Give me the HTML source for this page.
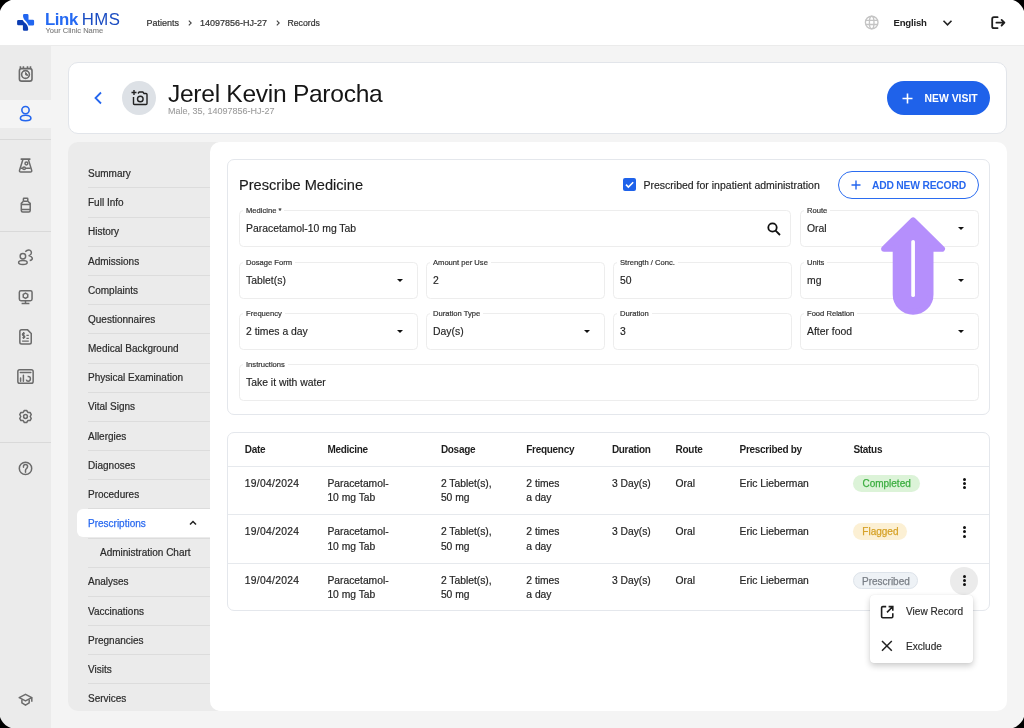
<!DOCTYPE html>
<html><head><meta charset="utf-8">
<style>
*{box-sizing:border-box;margin:0;padding:0}
html,body{width:1024px;height:728px;overflow:hidden;background:#000}
body{font-family:"Liberation Sans",sans-serif;color:#222;position:relative}
.screen{will-change:transform;position:absolute;left:0;top:0;width:1024px;height:728px;overflow:hidden;background:#f4f4f4}
.a{position:absolute;white-space:nowrap}
.topbar{position:absolute;left:0;top:0;width:1024px;height:46px;background:#fff;border-bottom:1px solid #ebebeb}
.side{position:absolute;left:0;top:45px;width:51px;height:683px;background:#ebebeb}
.sep{position:absolute;left:0;width:51px;height:1px;background:#d9d9d9}
.card{position:absolute;background:#fff;border:1px solid #e2e5ea;border-radius:10px}
.nav{position:absolute;left:68px;top:142px;width:150px;height:569px;background:#ebebeb;border-radius:10px 0 0 10px}
.navi{position:absolute;left:88px;font-size:10px;color:#2b2b2b;line-height:12px;-webkit-text-stroke:0.2px #2b2b2b}
.nsep{position:absolute;left:88px;width:122px;height:1px;background:#dcdcdc}
.content{position:absolute;left:210px;top:142px;width:797px;height:569px;background:#fff;border-radius:10px 10px 10px 10px}
.field{position:absolute;border:1px solid #ededed;border-radius:4.5px;background:#fff}
.flab{position:absolute;font-size:7.6px;color:#333;-webkit-text-stroke:0.2px #333;background:#fff;padding:0 3px;line-height:8px;top:-4px;left:3px}
.fval{position:absolute;font-size:10.4px;color:#1f1f1f;left:6px;top:12.4px;line-height:12px;-webkit-text-stroke:0.15px #1f1f1f}
.caret{position:absolute;width:0;height:0;border-left:3.6px solid transparent;border-right:3.6px solid transparent;border-top:3.8px solid #111}
.th{position:absolute;font-size:10px;font-weight:bold;color:#1e1e1e;letter-spacing:-0.3px;line-height:12px}
.td{position:absolute;font-size:10.3px;color:#262626;line-height:14.2px;-webkit-text-stroke:0.2px #262626}
.chip{position:absolute;height:17px;border-radius:9px;font-size:10px;line-height:17px;text-align:center;-webkit-text-stroke:0.25px currentColor}
.dots{position:absolute;width:3px}
.dots i{display:block;width:3px;height:3px;border-radius:50%;background:#111;margin-bottom:1.2px}
</style></head><body>
<div class="screen">
  <div class="topbar"></div>
  <!-- logo -->
  <svg class="a" style="left:14px;top:10px" width="24" height="24" viewBox="0 0 24 24">
    <path d="M9 5.4Q9 4.1 10.3 4.1L13.2 4.1Q14.5 4.1 14.5 5.4L14.5 9.7L18.8 9.7Q20.1 9.7 20.1 11L20.1 14.2Q20.1 15.5 18.8 15.5L14.6 15.5C13.8 13.5 12.5 12 11.2 10.6C9.8 9 9 7.5 9 5.4Z" fill="#2166f0"/>
    <path d="M3.1 11.2Q3.1 9.9 4.4 9.9L8.6 9.9C9.4 11.5 11 12.6 12.2 14C13.3 15.4 14.2 17 14.2 19.5Q14.2 20.8 12.9 20.8L10.2 20.8Q8.9 20.8 8.9 19.5L8.9 15.3L4.4 15.3Q3.1 15.3 3.1 14Z" fill="#0b3cb2"/>
  </svg>
  <div class="a" style="left:45px;top:9.6px;font-size:16.8px;font-weight:bold;color:#2469f2;letter-spacing:-0.4px;line-height:19px">Link</div>
  <div class="a" style="left:81.8px;top:9.6px;font-size:16.8px;color:#1a4cc2;letter-spacing:0.4px;line-height:19px">HMS</div>
  <div class="a" style="left:45.5px;top:27px;font-size:7.5px;color:#7c7c7c;-webkit-text-stroke:0.1px #7c7c7c;line-height:8px">Your Clinic Name</div>
  <!-- breadcrumb -->
  <div class="a" style="left:146.5px;top:17.7px;font-size:9px;color:#333;-webkit-text-stroke:0.2px #333;line-height:11px">Patients</div>
  <svg class="a" style="left:188px;top:20px" width="4" height="6" viewBox="0 0 4 6" fill="none" stroke="#444" stroke-width="1.1"><path d="M0.8 0.6L3.2 3L0.8 5.4"/></svg>
  <div class="a" style="left:200px;top:17.7px;font-size:9px;color:#333;-webkit-text-stroke:0.2px #333;line-height:11px">14097856-HJ-27</div>
  <svg class="a" style="left:275.5px;top:20px" width="4" height="6" viewBox="0 0 4 6" fill="none" stroke="#444" stroke-width="1.1"><path d="M0.8 0.6L3.2 3L0.8 5.4"/></svg>
  <div class="a" style="left:287.5px;top:17.7px;font-size:8.7px;color:#333;-webkit-text-stroke:0.2px #333;line-height:11px">Records</div>
  <!-- right top -->
  <svg class="a" style="left:860px;top:10px" width="24" height="24" viewBox="860 10 24 24" fill="none" stroke="#c4c4c4" stroke-width="1.35">
    <circle cx="871.7" cy="22.5" r="6.3"/><ellipse cx="871.7" cy="22.5" rx="2.3" ry="6.3"/><path d="M865.8 20.4H877.6M865.8 24.5H877.6"/>
  </svg>
  <div class="a" style="left:893.5px;top:16.8px;font-size:9.6px;font-weight:bold;color:#222;letter-spacing:-0.2px;line-height:11px">English</div>
  <svg class="a" style="left:942px;top:19px" width="11" height="8" viewBox="0 0 11 8" fill="none" stroke="#222" stroke-width="1.6"><path d="M1.5 1.8L5.5 5.8L9.5 1.8"/></svg>
  <svg class="a" style="left:986px;top:10px" width="24" height="24" viewBox="986 10 24 24" fill="none" stroke="#1e1e1e" stroke-width="1.8" stroke-linecap="round" stroke-linejoin="round">
    <path d="M997.6 17.2H993.9Q992.2 17.2 992.2 18.9V26.4Q992.2 28.1 993.9 28.1H997.6"/><path d="M996.4 22.7H1004M1001.6 19.9L1004.4 22.7L1001.6 25.5"/>
  </svg>

  <!-- sidebar -->
  <div class="side"></div>
  <div class="a" style="left:0;top:100px;width:51px;height:28px;background:#f4f4f4"></div>
  <div class="sep" style="top:139px"></div>
  <div class="sep" style="top:231px"></div>
  <div class="sep" style="top:442px"></div>
  <svg class="a" style="left:17px;top:65px" width="17" height="18" viewBox="0 0 17 18" fill="none" stroke="#6b6b6b" stroke-width="1.6">
    <rect x="2.4" y="3.6" width="12.6" height="12.5" rx="2.2"/><circle cx="8.5" cy="9.5" r="3.9"/><path d="M8.6 7.4L8.6 9.9L10.9 10.4Z" fill="#6b6b6b" stroke-width="1"/><path d="M3.4 1.2V3.6M6.4 1.2V3.6M10.5 1.2V3.6M13.5 1.2V3.6"/>
  </svg>
  <svg class="a" style="left:14px;top:102px" width="24" height="24" viewBox="14 102 24 24" fill="none" stroke="#2466ee" stroke-width="1.6">
    <circle cx="25.5" cy="110.1" r="3.65"/><path d="M20.4 118.2Q20.6 115.3 25.6 115.3Q30.6 115.3 30.9 118.2Q30.8 120.7 25.6 120.7Q20.4 120.7 20.4 118.2Z"/>
  </svg>
  <svg class="a" style="left:14px;top:153px" width="24" height="24" viewBox="14 153 24 24" fill="none" stroke="#6b6b6b" stroke-width="1.5">
    <path d="M21.3 159.1H29.8" stroke-width="1.7" stroke-linecap="round"/><path d="M22.9 159.6L19.5 170.4Q19.2 172 20.8 172H30.4Q32 172 31.7 170.4L28.4 159.6"/><circle cx="26.4" cy="163.5" r="1.4"/><path d="M20.6 168.3H22.8M25.4 168.3H30.6"/><circle cx="24.1" cy="168.3" r="1.3"/>
  </svg>
  <svg class="a" style="left:14px;top:193px" width="24" height="24" viewBox="14 193 24 24" fill="none" stroke="#6b6b6b" stroke-width="1.5">
    <rect x="23.4" y="198.3" width="4.4" height="2.9" rx=".6"/><path d="M23.4 201.2L21.3 203.4V210.6Q21.3 212.1 22.8 212.1H28.7Q30.2 212.1 30.2 210.6V203.4L27.8 201.2M21.3 204.4H30.2M21.3 209.4H30.2"/>
  </svg>
  <svg class="a" style="left:14px;top:245px" width="24" height="24" viewBox="14 245 24 24" fill="none" stroke="#6b6b6b" stroke-width="1.45">
    <circle cx="22.9" cy="256.2" r="2.75"/><ellipse cx="22.9" cy="262.4" rx="4.3" ry="2"/><path d="M25.3 251.7Q27.3 249.4 29.8 250.1Q31.9 251 31.2 253.4Q30.6 255.2 28.6 255.6Q31.6 256.3 32.3 258Q32.6 260 29.7 260.5"/>
  </svg>
  <svg class="a" style="left:14px;top:285px" width="24" height="24" viewBox="14 285 24 24" fill="none" stroke="#6b6b6b" stroke-width="1.5">
    <rect x="19.35" y="290.75" width="12.7" height="9.9" rx="1.6"/><path d="M25.5 300.7V303.6M21.6 303.6H29.4"/><path d="M25.5 293.1L27.75 294.4L27.75 297L25.5 298.3L23.25 297L23.25 294.4Z"/>
  </svg>
  <svg class="a" style="left:14px;top:325px" width="24" height="24" viewBox="14 325 24 24" fill="none" stroke="#6b6b6b" stroke-width="1.5">
    <path d="M19.85 331.6Q19.85 329.85 21.6 329.85H27.6L31.25 333.5V342.3Q31.25 344.05 29.5 344.05H21.6Q19.85 344.05 19.85 342.3Z"/><path d="M23.6 332.1V338.9M24.8 333.5H23.1Q22.4 333.5 22.4 334.6Q22.4 335.5 23.6 335.6Q24.8 335.7 24.8 336.7Q24.8 337.6 23.9 337.6H22.4M26.4 335.4H28.8M26.4 338.4H28.8M22.1 341.2H28.8" stroke-width="1.3"/>
  </svg>
  <svg class="a" style="left:14px;top:364px" width="24" height="24" viewBox="14 364 24 24" fill="none" stroke="#6b6b6b" stroke-width="1.5">
    <rect x="17.85" y="369.65" width="15.3" height="13.7" rx="1.8"/><path d="M20.3 372.6H30.8M20.6 378V381.2M23.4 375.2V381.2" stroke-linecap="round"/><path d="M27.6 376.6Q30.4 376.2 30.4 378.8Q30.4 381.2 28.2 381.2Q26.6 381.2 26.3 379.6"/>
  </svg>
  <svg class="a" style="left:14px;top:405px" width="24" height="24" viewBox="14 405 24 24" fill="none" stroke="#6b6b6b" stroke-width="1.5" stroke-linejoin="round">
    <path d="M23.15 412.43 L24.34 410.51 L26.66 410.51 L27.85 412.43 L30.10 412.50 L31.27 414.51 L30.20 416.50 L31.27 418.49 L30.10 420.50 L27.85 420.57 L26.66 422.49 L24.34 422.49 L23.15 420.57 L20.90 420.50 L19.73 418.49 L20.80 416.50 L19.73 414.51 L20.90 412.50Z"/><circle cx="25.5" cy="416.5" r="1.9"/>
  </svg>
  <svg class="a" style="left:14px;top:457px" width="24" height="24" viewBox="14 457 24 24" fill="none" stroke="#6b6b6b" stroke-width="1.5" stroke-linecap="round">
    <circle cx="25.5" cy="468.4" r="6.2"/><path d="M23.5 467.2Q23.1 464.6 25.4 464.6Q27.6 464.6 27.6 466.6Q27.6 467.8 26.3 468.8Q25.5 469.5 25.5 470.6V472.3"/>
  </svg>
  <svg class="a" style="left:14px;top:688px" width="24" height="24" viewBox="14 688 24 24" fill="none" stroke="#6b6b6b" stroke-width="1.5" stroke-linejoin="round">
    <path d="M25.5 694.3L19.2 697.6L25.5 700.9L31.8 697.6Z"/><path d="M21.9 699.4V702.9L25.5 705.2L29.2 702.9V699.4M31.8 697.6V701.8"/>
  </svg>

  <!-- header card -->
  <div class="card" style="left:68px;top:62px;width:939px;height:72px"></div>
  <svg class="a" style="left:92px;top:91px" width="12" height="14" viewBox="0 0 12 14" fill="none" stroke="#2466ee" stroke-width="1.8"><path d="M9 1.5L3.5 7L9 12.5"/></svg>
  <div class="a" style="left:122px;top:81px;width:34px;height:34px;border-radius:50%;background:#dde1e6"></div>
  <svg class="a" style="left:131px;top:89px" width="17" height="17" viewBox="0 0 17 17" fill="none" stroke="#222" stroke-width="1.4">
    <path d="M3 1V6M0.5 3.5H5.5"/><path d="M7 4.5L8.2 3H11.8L13 4.5H15Q16 4.5 16 5.5V14.5Q16 15.5 15 15.5H3.5Q2.5 15.5 2.5 14.5V8"/><circle cx="9.3" cy="10" r="2.8"/>
  </svg>
  <div class="a" style="left:168px;top:81px;font-size:24.6px;color:#151515;letter-spacing:-0.3px;line-height:26px">Jerel Kevin Parocha</div>
  <div class="a" style="left:168px;top:106.8px;font-size:9px;color:#9c9c9c;line-height:9px;-webkit-text-stroke:0.1px #9c9c9c">Male, 35, 14097856-HJ-27</div>
  <div class="a" style="left:887px;top:81px;width:103px;height:34px;border-radius:17px;background:#1f62ea"></div>
  <svg class="a" style="left:902px;top:93px" width="11" height="11" viewBox="0 0 11 11" stroke="#fff" stroke-width="1.6"><path d="M5.5 0.5V10.5M0.5 5.5H10.5"/></svg>
  <div class="a" style="left:924.5px;top:92.5px;font-size:10.4px;font-weight:bold;color:#fff;letter-spacing:0px;line-height:11px">NEW VISIT</div>

  <!-- nav panel -->
  <div class="nav"></div>
  <div class="content"></div>
  <div class="nsep" style="top:187px"></div>
<div class="nsep" style="top:217px"></div>
<div class="nsep" style="top:246px"></div>
<div class="nsep" style="top:275px"></div>
<div class="nsep" style="top:304px"></div>
<div class="nsep" style="top:333px"></div>
<div class="nsep" style="top:363px"></div>
<div class="nsep" style="top:392px"></div>
<div class="nsep" style="top:421px"></div>
<div class="nsep" style="top:450px"></div>
<div class="nsep" style="top:479px"></div>
<div class="nsep" style="top:508px"></div>
<div class="nsep" style="top:538px"></div>
<div class="nsep" style="top:567px"></div>
<div class="nsep" style="top:596px"></div>
<div class="nsep" style="top:625px"></div>
<div class="nsep" style="top:654px"></div>
<div class="nsep" style="top:683px"></div>
<div class="navi a" style="top:168.0px">Summary</div>
<div class="navi a" style="top:197.2px">Full Info</div>
<div class="navi a" style="top:226.3px">History</div>
<div class="navi a" style="top:255.5px">Admissions</div>
<div class="navi a" style="top:284.7px">Complaints</div>
<div class="navi a" style="top:313.9px">Questionnaires</div>
<div class="navi a" style="top:343.0px">Medical Background</div>
<div class="navi a" style="top:372.2px">Physical Examination</div>
<div class="navi a" style="top:401.4px">Vital Signs</div>
<div class="navi a" style="top:430.5px">Allergies</div>
<div class="navi a" style="top:459.7px">Diagnoses</div>
<div class="navi a" style="top:488.9px">Procedures</div>
<div class="a" style="left:77px;top:509.2px;width:133px;height:28.1px;background:#fff;border-radius:6px 0 0 6px"></div>
<div class="navi a" style="top:518.0px;color:#2a6af0;-webkit-text-stroke:0.25px #2a6af0">Prescriptions</div>
<svg class="a" style="left:189px;top:520.0px" width="8" height="6" viewBox="0 0 8 6" fill="none" stroke="#222" stroke-width="1.5"><path d="M1 4.5L4 1.5L7 4.5"/></svg>
<div class="navi a" style="left:100px;top:547.2px">Administration Chart</div>
<div class="navi a" style="top:576.4px">Analyses</div>
<div class="navi a" style="top:605.5px">Vaccinations</div>
<div class="navi a" style="top:634.7px">Pregnancies</div>
<div class="navi a" style="top:663.9px">Visits</div>
<div class="navi a" style="top:693.1px">Services</div>
<div class="card" style="left:227px;top:159px;width:763px;height:256px;border-radius:7px;border-color:#e4e7ec"></div>
<div class="a" style="left:239px;top:177px;font-size:14.6px;color:#1b1b1b;-webkit-text-stroke:0.15px #1b1b1b;line-height:16px">Prescribe Medicine</div>
<div class="a" style="left:623px;top:178px;width:13px;height:13px;border-radius:2px;background:#1f62ea"></div>
<svg class="a" style="left:623px;top:178px" width="13" height="13" viewBox="0 0 13 13" fill="none" stroke="#fff" stroke-width="1.6"><path d="M3 6.6L5.4 9L10.2 4.2"/></svg>
<div class="a" style="left:643.5px;top:178.5px;font-size:10.5px;color:#222;line-height:12px;-webkit-text-stroke:0.15px #222">Prescribed for inpatient administration</div>
<div class="a" style="left:838px;top:171px;width:141px;height:28px;border-radius:14px;border:1.6px solid #2b6cf0;background:#fff"></div>
<svg class="a" style="left:851px;top:180px" width="10" height="10" viewBox="0 0 10 10" stroke="#2466ee" stroke-width="1.4"><path d="M5 0.5V9.5M0.5 5H9.5"/></svg>
<div class="a" style="left:872px;top:179.8px;font-size:10.3px;font-weight:bold;color:#2868ee;letter-spacing:-0.2px;line-height:12px">ADD NEW RECORD</div>
<div class="field" style="left:239px;top:210px;width:552px;height:37px"><div class="flab">Medicine *</div><div class="fval">Paracetamol-10 mg Tab</div><svg class="a" style="left:527px;top:11px" width="14" height="14" viewBox="0 0 14 14" fill="none" stroke="#111" stroke-width="1.8"><circle cx="5.5" cy="5.5" r="4.2"/><path d="M8.6 8.6L13 13"/></svg></div>
<div class="field" style="left:800px;top:210px;width:179px;height:37px"><div class="flab">Route</div><div class="fval">Oral</div><div class="caret" style="left:156.5px;top:16px"></div></div>
<div class="field" style="left:239px;top:261.5px;width:179px;height:37px"><div class="flab">Dosage Form</div><div class="fval">Tablet(s)</div><div class="caret" style="left:156.5px;top:16px"></div></div>
<div class="field" style="left:426px;top:261.5px;width:179px;height:37px"><div class="flab">Amount per Use</div><div class="fval">2</div></div>
<div class="field" style="left:613px;top:261.5px;width:179px;height:37px"><div class="flab">Strength / Conc.</div><div class="fval">50</div></div>
<div class="field" style="left:800px;top:261.5px;width:179px;height:37px"><div class="flab">Units</div><div class="fval">mg</div><div class="caret" style="left:156.5px;top:16px"></div></div>
<div class="field" style="left:239px;top:313px;width:179px;height:37px"><div class="flab">Frequency</div><div class="fval">2 times a day</div><div class="caret" style="left:156.5px;top:16px"></div></div>
<div class="field" style="left:426px;top:313px;width:179px;height:37px"><div class="flab">Duration Type</div><div class="fval">Day(s)</div><div class="caret" style="left:156.5px;top:16px"></div></div>
<div class="field" style="left:613px;top:313px;width:179px;height:37px"><div class="flab">Duration</div><div class="fval">3</div></div>
<div class="field" style="left:800px;top:313px;width:179px;height:37px"><div class="flab">Food Relation</div><div class="fval">After food</div><div class="caret" style="left:156.5px;top:16px"></div></div>
<div class="field" style="left:239px;top:364px;width:740px;height:37px"><div class="flab">Instructions</div><div class="fval">Take it with water</div></div>
<div class="card" style="left:227px;top:432px;width:763px;height:179px;border-radius:7px;border-color:#e4e7ec"></div>
<div class="th" style="left:244.8px;top:444px">Date</div>
<div class="th" style="left:327.4px;top:444px">Medicine</div>
<div class="th" style="left:440.9px;top:444px">Dosage</div>
<div class="th" style="left:526.3px;top:444px">Frequency</div>
<div class="th" style="left:611.9px;top:444px">Duration</div>
<div class="th" style="left:675.6px;top:444px">Route</div>
<div class="th" style="left:739.6px;top:444px">Prescribed by</div>
<div class="th" style="left:853.4px;top:444px">Status</div>
<div class="a" style="left:228px;top:466.0px;width:761px;height:1px;background:#e6e9ed"></div>
<div class="td" style="left:244.8px;top:477.0px;letter-spacing:0.3px">19/04/2024</div>
<div class="td" style="left:327.4px;top:477.0px">Paracetamol-<br>10 mg Tab</div>
<div class="td" style="left:440.9px;top:477.0px">2 Tablet(s),<br>50 mg</div>
<div class="td" style="left:526.3px;top:477.0px">2 times<br>a day</div>
<div class="td" style="left:611.9px;top:477.0px">3 Day(s)</div>
<div class="td" style="left:675.6px;top:477.0px">Oral</div>
<div class="td" style="left:739.6px;top:477.0px">Eric Lieberman</div>
<div class="chip" style="left:853.4px;top:475.0px;width:66.4px;background:#dcf3d8;color:#3cae40;">Completed</div>
<div class="dots" style="left:962.6px;top:478.0px"><i></i><i></i><i></i></div>
<div class="a" style="left:228px;top:514.3px;width:761px;height:1px;background:#e6e9ed"></div>
<div class="td" style="left:244.8px;top:525.3px;letter-spacing:0.3px">19/04/2024</div>
<div class="td" style="left:327.4px;top:525.3px">Paracetamol-<br>10 mg Tab</div>
<div class="td" style="left:440.9px;top:525.3px">2 Tablet(s),<br>50 mg</div>
<div class="td" style="left:526.3px;top:525.3px">2 times<br>a day</div>
<div class="td" style="left:611.9px;top:525.3px">3 Day(s)</div>
<div class="td" style="left:675.6px;top:525.3px">Oral</div>
<div class="td" style="left:739.6px;top:525.3px">Eric Lieberman</div>
<div class="chip" style="left:853.4px;top:523.3px;width:54px;background:#fcf0d4;color:#d6a228;">Flagged</div>
<div class="dots" style="left:962.6px;top:526.3px"><i></i><i></i><i></i></div>
<div class="a" style="left:228px;top:562.6px;width:761px;height:1px;background:#e6e9ed"></div>
<div class="td" style="left:244.8px;top:573.6px;letter-spacing:0.3px">19/04/2024</div>
<div class="td" style="left:327.4px;top:573.6px">Paracetamol-<br>10 mg Tab</div>
<div class="td" style="left:440.9px;top:573.6px">2 Tablet(s),<br>50 mg</div>
<div class="td" style="left:526.3px;top:573.6px">2 times<br>a day</div>
<div class="td" style="left:611.9px;top:573.6px">3 Day(s)</div>
<div class="td" style="left:675.6px;top:573.6px">Oral</div>
<div class="td" style="left:739.6px;top:573.6px">Eric Lieberman</div>
<div class="chip" style="left:853.4px;top:571.6px;width:65px;background:#eef2f6;color:#7a7f86;border:1px solid #dde3ea;">Prescribed</div>
<div class="a" style="left:950px;top:566.6px;width:28px;height:28px;border-radius:50%;background:#ebebeb"></div>
<div class="dots" style="left:962.6px;top:574.6px"><i></i><i></i><i></i></div>
<div class="a" style="left:870px;top:595px;width:103px;height:68px;background:#fff;border-radius:4px;box-shadow:0 3px 6px rgba(0,0,0,0.2),0 0 1px rgba(0,0,0,0.12)"></div>
<svg class="a" style="left:879.5px;top:604.5px" width="15" height="15" viewBox="0 0 15 15" fill="none" stroke="#1e1e1e" stroke-width="1.6"><path d="M6.2 1.6H2.8Q1.6 1.6 1.6 2.8V11.6Q1.6 12.8 2.8 12.8H11.6Q12.8 12.8 12.8 11.6V8.2M8.6 1.6H12.8V5.8M12.6 1.8L7 7.4"/></svg>
<div class="a" style="left:906px;top:606px;font-size:10.1px;color:#2a2a2a;-webkit-text-stroke:0.15px #2a2a2a;line-height:12px">View Record</div>
<svg class="a" style="left:881px;top:640px" width="12" height="12" viewBox="0 0 12 12" fill="none" stroke="#222" stroke-width="1.5"><path d="M1 1L10.8 10.8M10.8 1L1 10.8"/></svg>
<div class="a" style="left:906px;top:640.5px;font-size:10.1px;color:#2a2a2a;-webkit-text-stroke:0.15px #2a2a2a;line-height:12px">Exclude</div>
<svg class="a" style="left:870px;top:210px" width="90" height="110" viewBox="870 210 90 110"><path d="M913.1 220.4 L942 248.8 L930.5 248.8 L930.5 294.4 A17.4 17.4 0 0 1 895.7 294.4 L895.7 248.8 L884.1 248.8 Z" fill="#b58ffc" stroke="#b58ffc" stroke-width="6" stroke-linejoin="round"/><path d="M913.1 241.8 V295.2" stroke="#fff" stroke-width="3.7" stroke-linecap="round"/></svg>
<svg class="a" style="left:0;top:0;z-index:10" width="1024" height="728" viewBox="0 0 1024 728" fill="#000">
    <path d="M0 0H11C6 1.5 1.5 6 0 11Z"/>
    <path d="M1024 0H1013C1018 1.5 1022.5 6 1024 11Z"/>
    <path d="M0 728H11C6 726.5 1.5 722 0 717Z"/>
    <path d="M1024 728H1013C1018 726.5 1022.5 722 1024 717Z"/>
  </svg>
</div>
</body></html>
